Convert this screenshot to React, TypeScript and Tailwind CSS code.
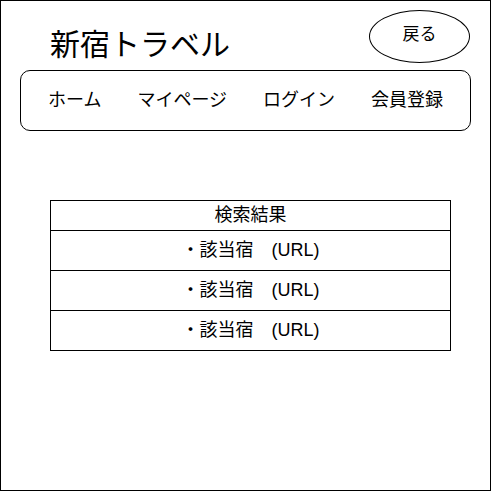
import React from 'react';

const navItems = ['ホーム', 'マイページ', 'ログイン', '会員登録'];
const results = ['・該当宿　(URL)', '・該当宿　(URL)', '・該当宿　(URL)'];

const App: React.FC = () => {
  return (
    <div className="w-[491px] h-[491px] border border-black bg-white text-black font-['Liberation_Sans','Noto_Sans_CJK_JP',sans-serif]">
      <div className="h-[69px] flex justify-between pl-[49px] pr-[20px]">
        <h1 className="mt-[24px] text-[30px] leading-[40px] font-normal">新宿トラベル</h1>
        <button className="mt-[9px] w-[101px] h-[53px] rounded-[50%] border border-black text-[17px] flex items-center justify-center pb-[3px]">
          戻る
        </button>
      </div>
      <nav className="ml-[19px] w-[451px] h-[61px] border border-black rounded-[10px] flex items-center justify-center gap-[36px] text-[18px]">
        {navItems.map((item) => (
          <span key={item}>{item}</span>
        ))}
      </nav>
      <div className="mt-[69px] ml-[49px] w-[401px] border border-black text-[18px]">
        <div className="h-[29px] flex items-center justify-center">検索結果</div>
        {results.map((r, i) => (
          <div key={i} className="h-[40px] border-t border-black flex items-center justify-center">
            {r}
          </div>
        ))}
      </div>
    </div>
  );
};

export default App;
